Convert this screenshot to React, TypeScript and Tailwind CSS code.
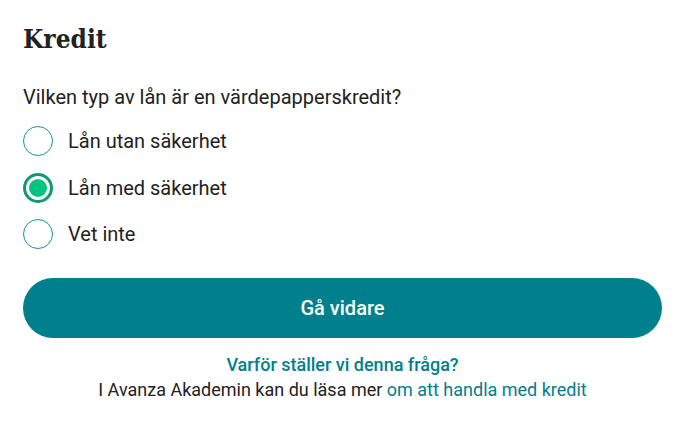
import React, { useState } from "react";

const options = ["Lån utan säkerhet", "Lån med säkerhet", "Vet inte"];

export default function App() {
  const [sel, setSel] = useState(1);
  return (
    <div className="w-[685px] h-[441px] bg-white px-[23px] pt-[23px] text-[#222]" style={{ fontFamily: "Roboto, 'Liberation Sans', sans-serif" }}>
      <h1 className="text-[26px] leading-[32px] font-bold text-[#222]" style={{ fontFamily: "'DejaVu Serif Condensed', 'DejaVu Serif', serif", fontStretch: "condensed" }}>
        Kredit
      </h1>
      <p className="mt-[30px] text-[20px] leading-[24px]">Vilken typ av lån är en värdepapperskredit?</p>
      <div className="mt-[17px] flex flex-col gap-[16.5px]">
        {options.map((o, i) => (
          <label key={o} className="flex items-center gap-[15px] cursor-pointer" onClick={() => setSel(i)}>
            <span
              className={
                "w-[30px] h-[30px] rounded-full flex items-center justify-center bg-white " +
                (sel === i ? "border-[3px] border-[#0f9a70]" : "border border-[#1a9a7a]")
              }
            >
              {sel === i && <span className="w-[18px] h-[18px] rounded-full bg-[#00c47f]" />}
            </span>
            <span className="text-[20px] leading-[24px]">{o}</span>
          </label>
        ))}
      </div>
      <button className="mt-[29px] w-full h-[60px] rounded-full bg-[#00808c] text-white text-[20px] font-medium">
        Gå vidare
      </button>
      <div className="mt-[13.5px] text-center text-[18px] leading-[25px]">
        <div className="font-medium text-[#00808c]">Varför ställer vi denna fråga?</div>
        <div>
          I Avanza Akademin kan du läsa mer <span className="text-[#00808c]">om att handla med kredit</span>
        </div>
      </div>
    </div>
  );
}
